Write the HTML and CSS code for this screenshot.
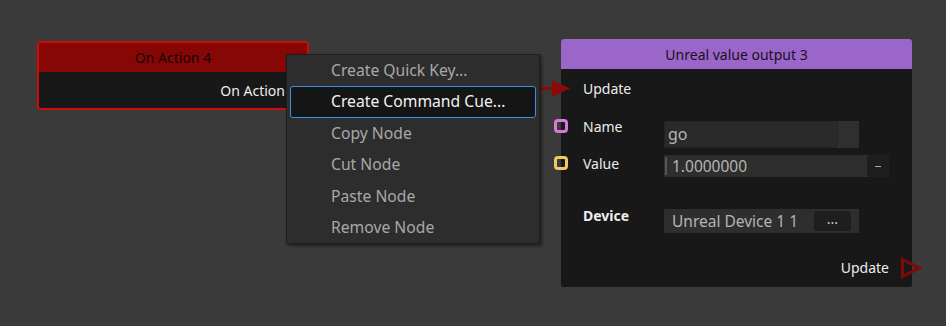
FILE: index.html
```html
<!DOCTYPE html>
<html lang="en">
<head>
  <meta charset="UTF-8">
  <title>Node graph</title>
  <link rel="stylesheet" href="styles.css">
</head>
<body>
  <div class="canvas">
    <div class="node node-action">
      <div class="node-title">On Action 4</div>
      <div class="node-body">
        <div class="out-label">On Action</div>
      </div>
    </div>

    <div class="node node-unreal">
      <div class="node-title">Unreal value output 3</div>
      <div class="node-body">
        <div class="row row-update">Update</div>
        <div class="row row-name">
          <span class="label">Name</span>
          <div class="field field-name">
            <span class="text-box">go</span>
            <span class="side"></span>
          </div>
        </div>
        <div class="row row-value">
          <span class="label">Value</span>
          <div class="field field-value">
            <span class="bar"></span>
            <span class="text">1.0000000</span>
            <span class="mini-btn"><i class="dash"></i></span>
          </div>
        </div>
        <div class="row row-device">
          <span class="label bold">Device</span>
          <div class="field field-device">
            <span class="text">Unreal Device 1 1</span>
            <span class="dots-btn">...</span>
          </div>
        </div>
        <div class="row row-out">Update</div>
      </div>
      <span class="port port-name"></span>
      <span class="port port-value"></span>
    </div>

    <svg class="link-arrow" width="34" height="20" viewBox="0 0 34 20">
      <rect x="0" y="8" width="16" height="3" fill="#8b0b0b"/>
      <path d="M15 1 L33 9.5 L15 18 Z" fill="#8b0b0b"/>
    </svg>
    <svg class="out-arrow" width="22" height="22" viewBox="0 0 22 22">
      <path d="M2.5 2.5 L19 11 L2.5 19.5 Z" fill="none" stroke="#7d0909" stroke-width="3" stroke-linejoin="miter"/>
    </svg>

    <div class="menu">
      <div class="menu-item">Create Quick Key...</div>
      <div class="menu-item active">Create Command Cue...</div>
      <div class="menu-item">Copy Node</div>
      <div class="menu-item">Cut Node</div>
      <div class="menu-item">Paste Node</div>
      <div class="menu-item">Remove Node</div>
    </div>
  </div>
</body>
</html>
```

FILE: styles.css
```css
html, body { margin: 0; padding: 0; }
body { background: #3a3a3a; font-family: "Noto Sans", "Open Sans", Arial, sans-serif; font-size: 14px; color: #ececec; overflow: hidden; }
.canvas { position: relative; width: 946px; height: 326px; }

.node { position: absolute; box-sizing: border-box; display: flex; flex-direction: column; overflow: visible; }
.node-title { text-align: center; color: #160404; }
.node-body { background: #181818; flex-grow: 1; }

.node-action { left: 37px; top: 41px; width: 272px; height: 69px; border: 2px solid #cc0b0b; border-radius: 4px; background: #181818; overflow: hidden; }
.node-action .node-title { background: #870707; height: 29px; line-height: 29px; }
.node-action .out-label { text-align: right; padding-right: 22px; line-height: 20px; margin-top: 9px; }

.node-unreal { left: 561px; top: 39px; width: 351px; height: 248px; border-radius: 3px; background: #181818; }
.node-unreal .node-title { background: #9a66c9; height: 30px; line-height: 31px; border-radius: 3px 3px 0 0; color: #1a1020; }
.node-unreal .node-body { padding: 0 23px 0 22px; border-radius: 0 0 3px 3px; }

.row { display: grid; grid-template-columns: 81px auto; align-items: start; }
.label { line-height: 20px; }
.bold { font-weight: bold; }
.row-update { display: block; line-height: 20px; margin-top: 10px; }
.row-name { margin-top: 18px; }
.row-value { margin-top: 6px; }
.row-device { margin-top: 29px; }
.row-out { display: block; text-align: right; line-height: 20px; margin-top: 25px; padding-right: 0; }

.field { display: flex; align-items: center; background: #2e2e2e; color: #b4b4b4; font-size: 15.5px; }
.field-name { width: 195px; height: 27px; margin-top: 4px; }
.field-name .text-box { box-sizing: border-box; width: 174px; height: 27px; line-height: 25px; padding-left: 3px; background: #2a2a2a; border: 1px solid #232323; border-radius: 0 4px 4px 0; font-size: 16px; }
.field-name .side { flex-grow: 1; height: 27px; background: #2f2f2f; }

.field-value { width: 225px; height: 22px; margin-top: 1px; }
.field-value .bar { width: 2px; height: 18px; background: #555; margin-left: 1px; }
.field-value .text { flex-grow: 1; padding-left: 5px; line-height: 22px; }
.field-value .mini-btn { display: flex; align-items: center; justify-content: center; width: 22px; height: 22px; background: #1e1e1e; border-radius: 3px; }
.dash { display: block; width: 6px; height: 1px; background: linear-gradient(to right, #9aa6c0, #d0b090); }

.field-device { width: 195px; height: 24px; margin-top: 3px; }
.field-device .text { flex-grow: 1; padding-left: 8px; line-height: 24px; }
.dots-btn { width: 37px; height: 20px; line-height: 16px; margin-right: 8px; text-align: center; background: #1e1e1e; border-radius: 3px; color: #d0d0d0; font-size: 14px; }

.port { position: absolute; width: 14px; height: 14px; box-sizing: border-box; border: 3px solid; border-radius: 4px; left: -7px; }
.port-name { top: 80px; border-color: #d978d9; }
.port-value { top: 117px; border-color: #f2c862; }

.link-arrow { position: absolute; left: 537px; top: 79px; }
.out-arrow { position: absolute; left: 900px; top: 257px; }

.menu { position: absolute; left: 286px; top: 54px; width: 254px; box-sizing: border-box; background: #2d2d2d; border: 1px solid #1e1e1e; box-shadow: 2px 2px 3px rgba(0,0,0,0.45); font-size: 15.7px; color: #a8a8a8; }
.menu-item { height: 31.4px; line-height: 31.4px; padding-left: 44px; box-sizing: border-box; }
.menu-item.active { margin: 0 3px; padding-left: 40px; background: #151515; border: 1px solid #3b8fe4; border-radius: 3px; line-height: 29.4px; color: #f2f2f2; }
```
